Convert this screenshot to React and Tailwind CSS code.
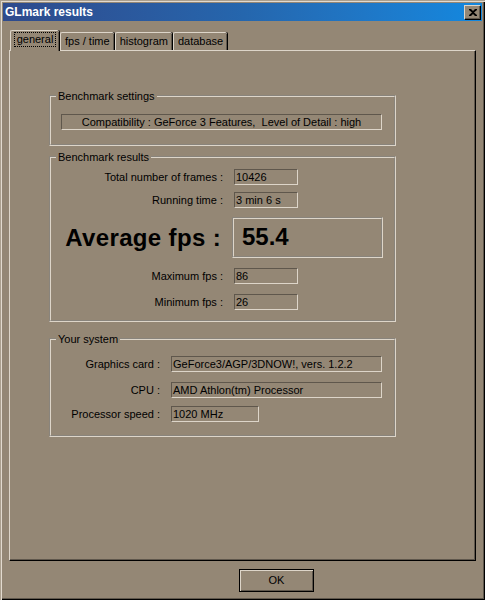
import React from "react";

const groove = "border-2 [border-style:groove] border-[#ddd5c9]";

function Field({ w, children }) {
  return (
    <div
      className={`h-[16px] ${w} border border-t-[#5f574c] border-l-[#5f574c] border-b-[#ddd5c9] border-r-[#ddd5c9] pl-[1px] text-[11px] leading-[14px] text-black whitespace-nowrap overflow-hidden`}
    >
      {children}
    </div>
  );
}

function Row({ label, value, labelW, fieldW, gap, mt }) {
  return (
    <div className={`flex items-center h-[16px] ${mt}`}>
      <div className={`${labelW} text-right text-[11px] leading-[14px] whitespace-nowrap`}>{label}</div>
      <div className={gap}>
        <Field w={fieldW}>{value}</Field>
      </div>
    </div>
  );
}

function Tab({ label, active }) {
  if (active) {
    return (
      <div className="relative z-10 h-[21px] w-[49px] -mb-[1px] bg-[#948775] border-t border-l border-[#ddd5c9] rounded-tl-[2px] rounded-tr-[2px] shadow-[inset_-1px_0_0_#5f574c,1px_0_0_#000] flex items-start justify-center pt-[2px]">
        <span className="px-[2px] leading-[13px] text-[11px] outline outline-1 outline-dotted outline-black">{label}</span>
      </div>
    );
  }
  return (
    <div className="h-[18px] bg-[#948775] border-t border-l border-[#ddd5c9] rounded-tl-[2px] rounded-tr-[2px] shadow-[inset_-1px_0_0_#5f574c,1px_0_0_#000] px-[4px] mr-[1px] flex items-start pt-[2px]">
      <span className="text-[11px] leading-[13px] whitespace-nowrap">{label}</span>
    </div>
  );
}

export default function App() {
  return (
    <div className="w-[485px] h-[600px] bg-[#948775] p-[3px] font-['Liberation_Sans',Arial,sans-serif] text-black shadow-[inset_1px_1px_0_#aa9f8e,inset_2px_2px_0_#e2dacf,inset_-1px_-1px_0_#000,inset_-2px_-2px_0_#5f574c] flex flex-col">
      {/* title bar */}
      <div className="h-[18px] bg-gradient-to-r from-[#2e4a8c] via-[#2566ad] to-[#1288df] flex items-center justify-between pl-[2px] pr-[2px]">
        <span className="font-bold text-[12px] text-white leading-[14px]">GLmark results</span>
        <div className="w-[16px] h-[14px] bg-[#948775] border-t border-l border-[#ddd5c9] shadow-[inset_-1px_-1px_0_#5f574c,1px_1px_0_#000] flex items-center justify-center">
          <svg width="8" height="7" viewBox="0 0 8 7">
            <path d="M0 0h2l2 2 2-2h2v1L5 3.5 8 6v1H6L4 5 2 7H0V6l3-2.5L0 1z" fill="#000" />
          </svg>
        </div>
      </div>

      <div className="ml-[6px] mt-[9px] w-[467px]">
        {/* tabs */}
        <div className="flex items-end h-[20px] pl-[1px]">
          <Tab label="general" active />
          <div className="w-[1px]" />
          <Tab label="fps / time" />
          <Tab label="histogram" />
          <Tab label="database" />
        </div>

        {/* panel */}
        <div className="h-[511px] border-t border-l border-[#ddd5c9] border-r border-b border-r-black border-b-black shadow-[inset_-1px_-1px_0_#5f574c] flex flex-col">
          <fieldset className={`ml-[39px] mt-[38px] w-[347px] h-[57px] ${groove} p-0 m-0`}>
            <legend className="ml-[5px] px-[2px] text-[11px] leading-[14px]">Benchmark settings</legend>
            <div className="mt-[11px] ml-[10px]">
              <div className="h-[16px] w-[321px] border border-t-[#5f574c] border-l-[#5f574c] border-b-[#ddd5c9] border-r-[#ddd5c9] text-center text-[11px] leading-[14px] whitespace-nowrap">
                Compatibility : GeForce 3 Features,&nbsp; Level of Detail : high
              </div>
            </div>
          </fieldset>

          <fieldset className={`ml-[39px] mt-[4px] w-[347px] h-[172px] ${groove} p-0`}>
            <legend className="ml-[5px] px-[2px] text-[11px] leading-[14px]">Benchmark results</legend>
            <Row label="Total number of frames :" value="10426" labelW="w-[172px]" fieldW="w-[64px]" gap="ml-[11px]" mt="mt-[5px]" />
            <Row label="Running time :" value="3 min 6 s" labelW="w-[172px]" fieldW="w-[64px]" gap="ml-[11px]" mt="mt-[7px]" />
            <div className="flex items-center mt-[9px] h-[41px]">
              <div className="w-[172px] pr-[2px] text-right text-[24px] font-bold leading-[28px] tracking-[0.35px] whitespace-nowrap">Average fps :</div>
              <div className={`ml-[9px] w-[151px] h-[41px] ${groove} pl-[8px] flex items-center`}>
                <span className="text-[24px] font-bold leading-[28px] -mt-[2px]">55.4</span>
              </div>
            </div>
            <Row label="Maximum fps :" value="86" labelW="w-[172px]" fieldW="w-[64px]" gap="ml-[11px]" mt="mt-[10px]" />
            <Row label="Minimum fps :" value="26" labelW="w-[172px]" fieldW="w-[64px]" gap="ml-[11px]" mt="mt-[10px]" />
          </fieldset>

          <fieldset className={`ml-[39px] mt-[10px] w-[347px] h-[105px] ${groove} p-0`}>
            <legend className="ml-[5px] px-[2px] text-[11px] leading-[14px]">Your system</legend>
            <Row label="Graphics card :" value="GeForce3/AGP/3DNOW!, vers. 1.2.2" labelW="w-[109px]" fieldW="w-[211px]" gap="ml-[11px]" mt="mt-[10px]" />
            <Row label="CPU :" value="AMD Athlon(tm) Processor" labelW="w-[109px]" fieldW="w-[211px]" gap="ml-[11px]" mt="mt-[10px]" />
            <Row label="Processor speed :" value="1020 MHz" labelW="w-[109px]" fieldW="w-[88px]" gap="ml-[11px]" mt="mt-[8px]" />
          </fieldset>
        </div>
      </div>

      {/* ok button */}
      <div className="mt-[6px] ml-[236px]">
        <button className="w-[75px] h-[23px] border border-black bg-[#948775] shadow-[inset_1px_1px_0_#ddd5c9,inset_-1px_-1px_0_#5f574c] text-[11px] leading-[14px]">
          OK
        </button>
      </div>
    </div>
  );
}
